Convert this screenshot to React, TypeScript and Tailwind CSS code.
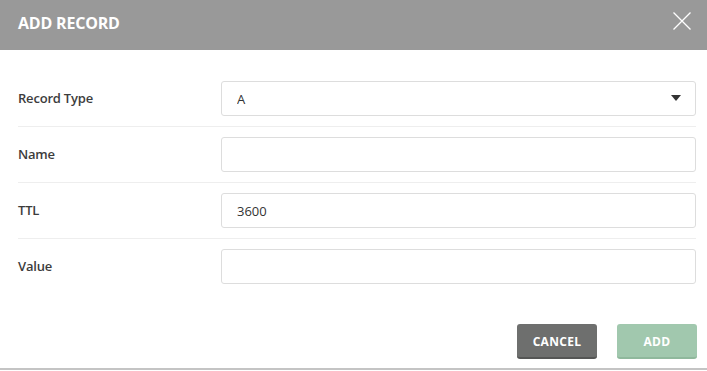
import React, { useState } from 'react'

const FONT = { fontFamily: '"Open Sans", "Noto Sans", sans-serif' }

interface Field {
  label: string
  value: string
  select?: boolean
}

const FIELDS: Field[] = [
  { label: 'Record Type', value: 'A', select: true },
  { label: 'Name', value: '' },
  { label: 'TTL', value: '3600' },
  { label: 'Value', value: '' },
]

export default function App() {
  const [values, setValues] = useState<string[]>(FIELDS.map(f => f.value))

  return (
    <div className="w-[707px] h-[371px] bg-white flex flex-col" style={FONT}>
      {/* header */}
      <div className="h-[50px] bg-[#999999] flex items-center justify-between pl-[18px] pr-[16px] shrink-0">
        <h2 className="text-white text-[16px] font-bold tracking-[-0.2px] mt-[-4px]">ADD RECORD</h2>
        <button className="w-[18px] h-[18px] mt-[-8px]" aria-label="close">
          <svg width="18" height="18" viewBox="0 0 18 18">
            <path d="M0.5 0.5 L17.5 17.5 M17.5 0.5 L0.5 17.5" stroke="#ffffff" strokeWidth="1.3" />
          </svg>
        </button>
      </div>

      {/* form */}
      <div className="pt-[21px] pl-[18px] pr-[11px]">
        {FIELDS.map((f, i) => (
          <div
            key={f.label}
            className={`flex items-center py-[10px] ${i < FIELDS.length - 1 ? 'border-b border-[#eeeeee]' : ''}`}
          >
            <label className="w-[203px] text-[13px] font-semibold text-[#3c3c3c] tracking-[-0.2px]">{f.label}</label>
            <div className="relative flex-1">
              <input
                value={values[i]}
                onChange={e => setValues(v => v.map((x, j) => (j === i ? e.target.value : x)))}
                className="w-full h-[35px] border border-[#dddddd] rounded-[3px] px-[15px] text-[13px] text-[#333333] outline-none"
                style={FONT}
                readOnly={f.select}
              />
              {f.select && (
                <svg
                  className="absolute right-[15px] top-[14px]"
                  width="10"
                  height="6"
                  viewBox="0 0 10 6"
                >
                  <path d="M0 0 H10 L5 6 Z" fill="#333333" />
                </svg>
              )}
            </div>
          </div>
        ))}
      </div>

      {/* footer */}
      <div className="flex justify-end gap-[20px] pr-[10px] pt-[30px]">
        <button className="w-[80px] h-[35px] pt-[2px] rounded-[3px] bg-[#6e6f6e] border-b-2 border-[#555655] text-white text-[12px] font-bold tracking-[0.3px]">
          CANCEL
        </button>
        <button className="w-[80px] h-[35px] pt-[2px] rounded-[3px] bg-[#a1c8ae] border-b-2 border-[#8fb89c] text-white text-[12px] font-bold tracking-[0.3px]">
          ADD
        </button>
      </div>
      <div className="mt-auto h-[2px] bg-[#c4c4c4] mb-[1px]" />
    </div>
  )
}
